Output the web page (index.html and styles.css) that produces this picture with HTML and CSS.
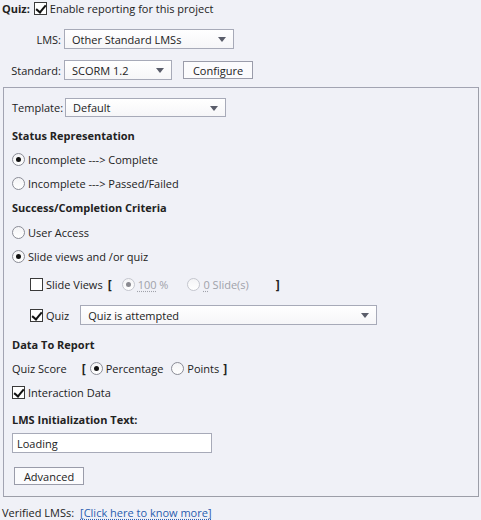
FILE: index.html
```html
<!DOCTYPE html>
<html>
<head>
<meta charset="utf-8">
<link rel="stylesheet" href="styles.css">
</head>
<body>
<div class="row top">
  <span class="bold">Quiz:</span>
  <span class="cb checked"></span>
  <span class="lbl">Enable reporting for this project</span>
</div>
<div class="row lms">
  <span class="flabel">LMS:</span>
  <div class="select w-lms"><span>Other Standard LMSs</span><i class="arrow"></i></div>
</div>
<div class="row std">
  <span class="flabel">Standard:</span>
  <div class="select w-std"><span>SCORM 1.2</span><i class="arrow"></i></div>
  <div class="btn configure">Configure</div>
</div>
<div class="panel">
  <div class="row tmpl">
    <span class="tlabel">Template:</span>
    <div class="select w-tmpl"><span>Default</span><i class="arrow"></i></div>
  </div>
  <div class="line bold">Status Representation</div>
  <div class="line"><span class="rb on"></span><span class="lbl">Incomplete ---&gt; Complete</span></div>
  <div class="line"><span class="rb"></span><span class="lbl">Incomplete ---&gt; Passed/Failed</span></div>
  <div class="line bold">Success/Completion Criteria</div>
  <div class="line ua"><span class="rb"></span><span class="lbl">User Access</span></div>
  <div class="line"><span class="rb on"></span><span class="lbl">Slide views and /or quiz</span></div>
  <div class="line indent sv">
    <span class="cb"></span><span class="lbl">Slide Views</span>
    <span class="brk">[</span>
    <span class="rb on dis"></span><span class="lbl dtext"><u>100</u> %</span>
    <span class="rb dis second"></span><span class="lbl dtext"><u>0</u> Slide(s)</span>
    <span class="brk close">]</span>
  </div>
  <div class="line indent quiz">
    <span class="cb checked"></span><span class="lbl">Quiz</span>
    <div class="select w-quiz"><span>Quiz is attempted</span><i class="arrow"></i></div>
  </div>
  <div class="line bold dtr">Data To Report</div>
  <div class="line">
    <span>Quiz Score</span>
    <span class="brk qs">[</span>
    <span class="rb on"></span><span class="lbl">Percentage</span>
    <span class="rb pts"></span><span class="lbl">Points</span>
    <span class="brk qe">]</span>
  </div>
  <div class="line"><span class="cb checked"></span><span class="lbl">Interaction Data</span></div>
  <div class="line bold init">LMS Initialization Text:</div>
  <div class="input">Loading</div>
  <div class="btn advanced">Advanced</div>
</div>
<div class="row verified">
  <span>Verified LMSs:</span>
  <a class="link" href="#">[Click here to know more]</a>
</div>
</body>
</html>
```

FILE: styles.css
```css
* { box-sizing: border-box; }
html, body { margin: 0; padding: 0; }
body {
  background: #f0f1f7;
  font-family: "Open Sans", "Noto Sans", sans-serif;
  font-size: 11px;
  color: #222;
  width: 481px;
  height: 520px;
  overflow: hidden;
}
.row { display: flex; align-items: center; }
.bold { font-weight: bold; }
.top { height: 16px; padding-left: 2px; }
.top .cb { margin-left: 4px; }
.lbl { margin-left: 3px; }
.flabel { width: 61px; text-align: right; padding-right: 0; }
.lms { margin-top: 13px; height: 20px; }
.std { margin-top: 11px; height: 20px; }
.select {
  position: relative;
  height: 20px;
  border: 1px solid #a7aab8;
  background: linear-gradient(#ffffff, #f6f6f8);
  display: flex;
  align-items: center;
  padding-left: 7px;
  margin-left: 3px;
}
.arrow {
  position: absolute;
  right: 7px;
  top: 7px;
  width: 0; height: 0;
  border-left: 4px solid transparent;
  border-right: 4px solid transparent;
  border-top: 5px solid #5a5d6a;
}
.w-lms { width: 170px; }
.w-std { width: 108px; }
.w-tmpl { width: 161px; height: 19px; margin-left: 2px; }
.w-quiz { width: 297px; margin-left: 11px; }
.btn {
  height: 18px;
  border: 1px solid #9a9caa;
  background: #fbfbfd;
  display: flex;
  align-items: center;
  justify-content: center;
}
.configure { width: 70px; margin-left: 11px; }
.panel {
  margin: 7px 0 0 3px;
  width: 476px;
  height: 410px;
  border: 1px solid #a2a4b2;
  border-right-color: #9c9ea8;
  border-bottom-color: #9c9ea8;
  padding: 10px 0 0 7px;
}
.tmpl { height: 19px; padding-left: 1px; }
.line { display: flex; align-items: center; height: 24px; padding-left: 1px; }
.tmpl + .line { margin-top: 6px; }
.ua { margin-top: 1px; }
.indent { padding-left: 19px; }
.sv { margin-top: 4px; }
.quiz { margin-top: 7px; }
.dtr { margin-top: 5px; }
.init { margin-top: 3px; }
.cb {
  width: 13px; height: 13px;
  border: 1px solid #3a3a3a;
  background: #fff;
  position: relative;
  flex: none;
}
.cb.checked::after {
  content: "";
  position: absolute;
  left: 3px; top: 0px;
  width: 4px; height: 8px;
  border-right: 2px solid #111;
  border-bottom: 2px solid #111;
  transform: rotate(40deg);
}
.rb {
  width: 13px; height: 13px;
  border: 1px solid #8a8c96;
  border-radius: 50%;
  background: linear-gradient(#f4f4f6, #ffffff);
  position: relative;
  flex: none;
}
.rb.on::after {
  content: "";
  position: absolute;
  left: 3px; top: 3px;
  width: 5px; height: 5px;
  border-radius: 50%;
  background: #111;
}
.rb.dis { border-color: #c4c6ce; }
.rb.dis.on::after { background: #8a8a90; }
.dtext { color: #a0a2aa; }
.dtext u { text-decoration: underline dotted; text-underline-offset: 2px; }
.brk { font-weight: bold; font-size: 12px; }
.sv .brk { margin-left: 5px; margin-right: 10px; }
.sv .second { margin-left: 19px; }
.sv .close { margin-left: 27px; }
.qs { margin-left: 15px; margin-right: 4px; }
.pts { margin-left: 8px; }
.qe { margin-left: 4px; }
.input {
  margin-top: 2px;
  margin-left: 1px;
  width: 200px;
  height: 20px;
  border: 1px solid #a7aab8;
  background: #fff;
  padding-left: 4px;
  display: flex;
  align-items: center;
}
.advanced { width: 70px; margin-top: 14px; margin-left: 3px; }
.verified { margin-top: 3px; height: 24px; padding-left: 2px; }
.link {
  margin-left: 6px;
  color: #2a5db0;
  text-decoration: underline dotted;
  text-underline-offset: 2px;
}
```
